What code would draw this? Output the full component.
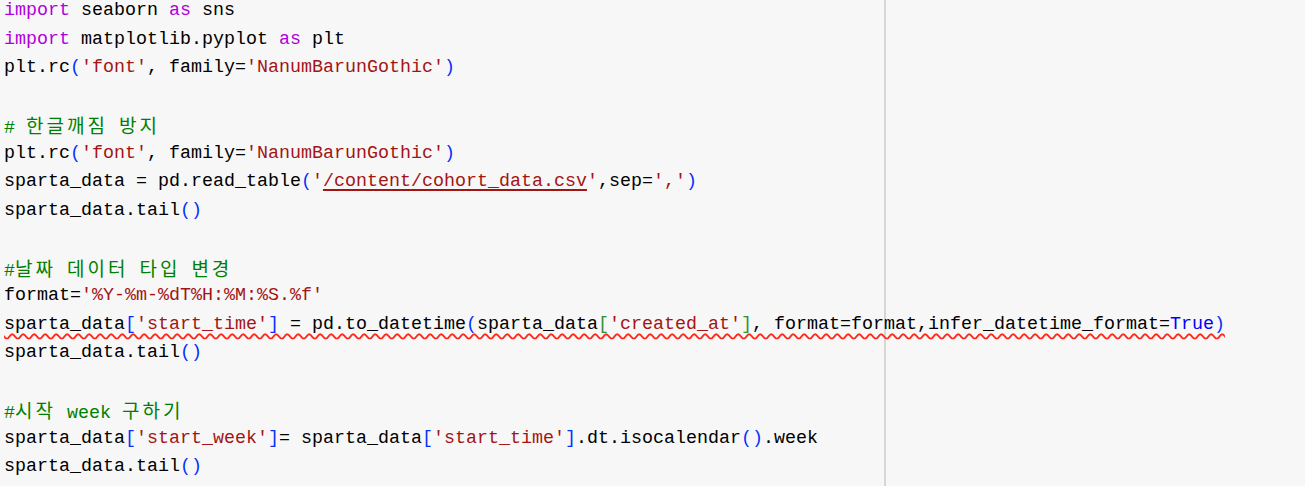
import React from "react";

type Tok = [string, string?];

const kw = "text-[#af00db]";
const str = "text-[#a31515]";
const com = "text-[#008000]";
const b1 = "text-[#0431fa]";
const b2 = "text-[#319331]";
const cst = "text-[#0000ff]";

const lines: { toks: Tok[]; squiggle?: boolean }[] = [
  { toks: [["import", kw], [" seaborn "], ["as", kw], [" sns"]] },
  { toks: [["import", kw], [" matplotlib.pyplot "], ["as", kw], [" plt"]] },
  { toks: [["plt.rc"], ["(", b1], ["'font'", str], [", family="], ["'NanumBarunGothic'", str], [")", b1]] },
  { toks: [] },
  { toks: [["# 한글깨짐 방지", com]] },
  { toks: [["plt.rc"], ["(", b1], ["'font'", str], [", family="], ["'NanumBarunGothic'", str], [")", b1]] },
  {
    toks: [
      ["sparta_data = pd.read_table"],
      ["(", b1],
      ["'", str],
      ["/content/cohort_data.csv", "link"],
      ["'", str],
      [",sep="],
      ["','", str],
      [")", b1],
    ],
  },
  { toks: [["sparta_data.tail"], ["()", b1]] },
  { toks: [] },
  { toks: [["#날짜 데이터 타입 변경", com]] },
  { toks: [["format="], ["'%Y-%m-%dT%H:%M:%S.%f'", str]] },
  {
    squiggle: true,
    toks: [
      ["sparta_data"],
      ["[", b1],
      ["'start_time'", str],
      ["]", b1],
      [" = pd.to_datetime"],
      ["(", b1],
      ["sparta_data"],
      ["[", b2],
      ["'created_at'", str],
      ["]", b2],
      [", format=format,infer_datetime_format="],
      ["True", cst],
      [")", b1],
    ],
  },
  { toks: [["sparta_data.tail"], ["()", b1]] },
  { toks: [] },
  { toks: [["#시작 week 구하기", com]] },
  {
    toks: [
      ["sparta_data"],
      ["[", b1],
      ["'start_week'", str],
      ["]", b1],
      ["= sparta_data"],
      ["[", b1],
      ["'start_time'", str],
      ["]", b1],
      [".dt.isocalendar"],
      ["()", b1],
      [".week"],
    ],
  },
  { toks: [["sparta_data.tail"], ["()", b1]] },
];

// Hangul takes two mono cells (22px) in the editor
const withHangul = (text: string) =>
  text.split(/([\uAC00-\uD7A3]+)/).map((part, i) =>
    /[\uAC00-\uD7A3]/.test(part) ? (
      <span
        key={i}
        className="font-['Noto_Sans_CJK_KR',sans-serif] text-[19px] tracking-[3px]"
      >
        {part}
      </span>
    ) : (
      part
    )
  );

export default function App() {
  return (
    <div className="relative w-[1305px] h-[486px] overflow-hidden bg-[#f7f7f7]">
      <div className="absolute left-[884px] top-0 bottom-0 w-[2px] bg-[#d6d6d6]" />
      <div className="relative -mt-[3px] pl-[4px] font-['Liberation_Mono','DejaVu_Sans_Mono',monospace] text-[18.33px] text-black whitespace-pre">
        {lines.map((line, i) => (
          <div key={i} className="h-[28.5px] leading-[28.5px]">
            <span
              className={
                line.squiggle
                  ? "underline decoration-wavy decoration-[#ff2a1a] decoration-[1.5px] underline-offset-[4px]"
                  : ""
              }
            >
              {line.toks.map(([t, c], j) =>
                c === "link" ? (
                  <span
                    key={j}
                    className="text-[#a31515] underline decoration-[#a31515] decoration-2 underline-offset-[3px]"
                  >
                    {t}
                  </span>
                ) : (
                  <span key={j} className={c ?? ""}>
                    {withHangul(t)}
                  </span>
                )
              )}
            </span>
          </div>
        ))}
      </div>
    </div>
  );
}
